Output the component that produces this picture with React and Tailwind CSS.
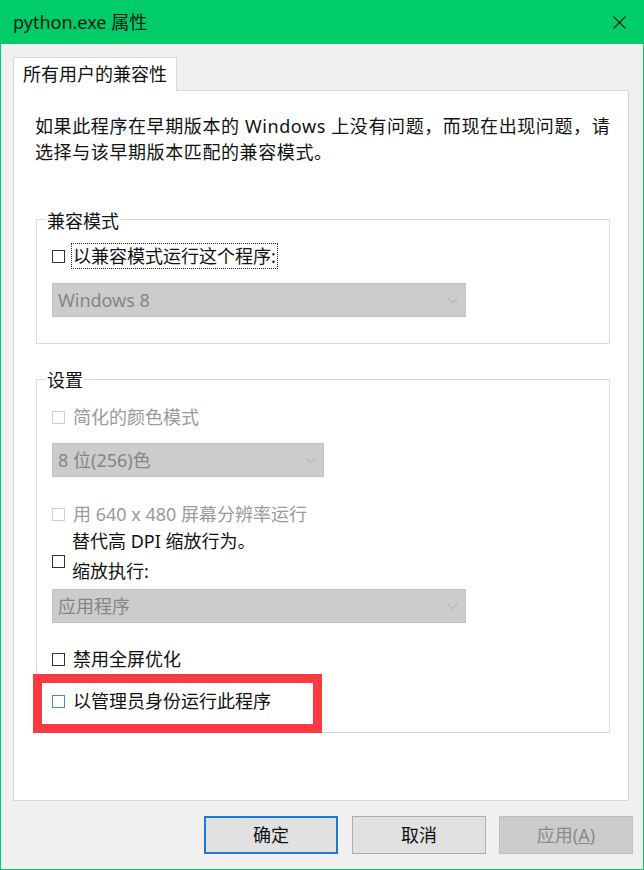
import React from 'react';

const font = { fontFamily: '"Noto Sans", "Noto Sans CJK SC", sans-serif' };

function Chevron() {
  return (
    <svg width="11" height="7" viewBox="0 0 11 7" className="shrink-0">
      <polyline points="0.5,0.8 5.5,5.8 10.5,0.8" fill="none" stroke="#a9a9a9" strokeWidth="1" />
    </svg>
  );
}

function Select({ width, children }) {
  return (
    <div
      className="h-[34px] bg-[#cccccc] border border-[#c3c3c3] flex items-center justify-between pl-[5px] pr-[7px] text-[18px] text-[#858585]"
      style={{ width }}
    >
      <span className="leading-[26px]">{children}</span>
      <Chevron />
    </div>
  );
}

function Box({ tone = 'dark' }) {
  const border =
    tone === 'dark' ? 'border-[#333333]' : tone === 'blue' ? 'border-[#3e8de0]' : 'border-[#cfcfcf]';
  return <span className={`block w-[13px] h-[13px] border bg-white shrink-0 ${border}`} />;
}

function Check({ children, tone, disabled }) {
  return (
    <div className="flex items-center h-[26px]">
      <Box tone={tone} />
      <span className={`ml-[8px] text-[18px] leading-[26px] ${disabled ? 'text-[#9a9a9a]' : 'text-[#111]'}`}>
        {children}
      </span>
    </div>
  );
}

function Group({ title, labelTop, pt, children, extra }) {
  return (
    <div className="relative ml-[1px] w-[574px] border border-[#dcdcdc] pl-[15px]" style={{ paddingTop: pt }}>
      <span
        className="absolute left-[9px] bg-white px-[1px] text-[18px] leading-[26px] text-[#111]"
        style={{ top: labelTop }}
      >
        {title}
      </span>
      {children}
      {extra}
    </div>
  );
}

export default function App() {
  return (
    <div
      className="w-[644px] h-[870px] bg-[#f0f0f0] border border-t-0 border-[#00cc6a] flex flex-col"
      style={font}
    >
      {/* title bar */}
      <div className="h-[44px] bg-[#00cc6a] flex items-center justify-between pl-[12px] pr-[17px] shrink-0">
        <span className="text-[18px] leading-[26px] text-[#0b1a10]">python.exe 属性</span>
        <svg width="13" height="13" viewBox="0 0 13 13">
          <path d="M0.5 0.5 L12.5 12.5 M12.5 0.5 L0.5 12.5" stroke="#1a1a1a" strokeWidth="1.1" />
        </svg>
      </div>

      <div className="pl-[12px] pt-[13px] flex flex-col">
        {/* tab */}
        <div className="relative z-10 w-[164px] h-[34px] -mb-px bg-white border border-b-0 border-[#d9d9d9] flex items-center justify-center text-[18px] text-[#111]">
          所有用户的兼容性
        </div>

        {/* panel */}
        <div className="w-[616px] h-[711px] bg-white border border-[#d9d9d9] pl-[21px] pt-[22px]">
          <p className="text-[18px] leading-[26px] tracking-[0.6px] text-[#111]">
            如果此程序在早期版本的 Windows 上没有问题，而现在出现问题，请
            <br />
            选择与该早期版本匹配的兼容模式。
          </p>

          <div className="mt-[54px]">
            <Group title="兼容模式" labelTop="-12px" pt="23px">
              <div className="flex items-center h-[26px]">
                <Box />
                <span className="ml-[6px] px-[1px] border border-dotted border-[#222] text-[18px] leading-[24px] text-[#111]">
                  以兼容模式运行这个程序:
                </span>
              </div>
              <div className="mt-[14px] pb-[26px]">
                <Select width="414px">Windows 8</Select>
              </div>
            </Group>
          </div>

          <div className="mt-[35px]">
            <Group
              title="设置"
              labelTop="-13px"
              pt="24px"
              extra={
                <div className="absolute left-[-4px] top-[294px] w-[289px] h-[59px] border-[9px] border-[#fa3a3e]" />
              }
            >
              <Check tone="light" disabled>简化的颜色模式</Check>
              <div className="mt-[13px]">
                <Select width="272px">8 位(256)色</Select>
              </div>
              <div className="mt-[24px]">
                <Check tone="light" disabled>用 640 x 480 屏幕分辨率运行</Check>
              </div>
              <div className="flex mt-[-1px]">
                <span className="mt-[29px]">
                  <Box />
                </span>
                <div className="ml-[7px] text-[18px] leading-[30px] text-[#111]">
                  <div>替代高 DPI 缩放行为。</div>
                  <div>缩放执行:</div>
                </div>
              </div>
              <div className="mt-[3px]">
                <Select width="414px">应用程序</Select>
              </div>
              <div className="mt-[23px]">
                <Check>禁用全屏优化</Check>
              </div>
              <div className="mt-[16px] pb-[18px]">
                <Check tone="blue">以管理员身份运行此程序</Check>
              </div>
            </Group>
          </div>
        </div>

        {/* buttons */}
        <div className="mt-[15px] flex justify-end pr-[10px] text-[18px]">
          <button className="w-[134px] h-[38px] bg-[#e1e1e1] border-2 border-[#1f78d1] text-[#111]">确定</button>
          <button className="ml-[14px] w-[134px] h-[38px] bg-[#e1e1e1] border border-[#adadad] text-[#111]">取消</button>
          <button className="ml-[13px] w-[134px] h-[38px] bg-[#cccccc] border border-[#bfbfbf] text-[#8a8a8a]">
            应用(<span className="underline">A</span>)
          </button>
        </div>
      </div>
    </div>
  );
}
